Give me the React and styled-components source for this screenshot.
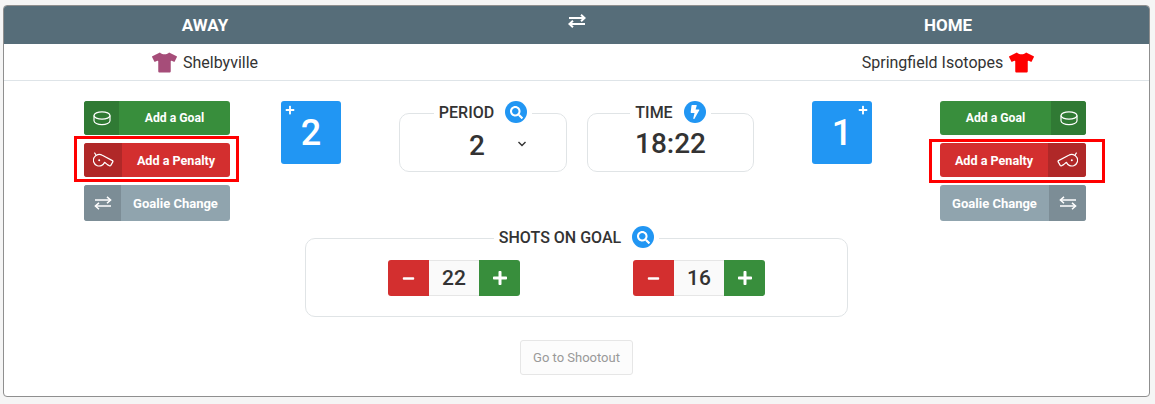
import React from "react";
import styled, { createGlobalStyle } from "styled-components";
import { FaTshirt, FaSearch, FaBolt, FaMinus, FaPlus } from "react-icons/fa";

const GlobalStyle = createGlobalStyle`
  html, body {
    margin: 0;
    padding: 0;
    background: #f5f5f5;
    font-family: Roboto, "Liberation Sans", sans-serif;
    color: #333;
  }
`;

const Puck = () => (
  <svg width="18" height="15" viewBox="0 0 18 15" fill="none" stroke="#fff" strokeWidth="1.2">
    <ellipse cx="9" cy="4.5" rx="8" ry="3.7" />
    <path d="M1 4.5v5.2c0 2.2 3.6 4 8 4s8-1.8 8-4V4.5" />
  </svg>
);

const Whistle = ({ flip }) => (
  <svg
    width="21"
    height="16"
    viewBox="0 0 21 16"
    fill="none"
    stroke="#fff"
    strokeWidth="1.2"
    strokeLinejoin="round"
    style={flip ? { transform: "scaleX(-1)" } : undefined}
  >
    <path d="M1.4 .6 3 3" />
    <path d="M9.3 3.3 19.4 8.6Q20.2 9.1 19.8 9.9L17.8 13.4Q17.3 14.1 16.4 13.7L14.4 12.6 11.6 10.3A5.8 5.8 0 1 1 9.3 3.3Z" />
    <circle cx="6.2" cy="8.2" r="1" fill="#fff" stroke="none" />
  </svg>
);

const Swap = ({ flip, width = 18, weight = 1.5 }) => (
  <svg
    width={width}
    height={width * 0.78}
    viewBox="0 0 18 14"
    fill="none"
    stroke="#fff"
    strokeWidth={weight}
    style={flip ? { transform: "scaleX(-1)" } : undefined}
  >
    <path d="M1 4h15" />
    <path d="M13 .8 16.6 4 13 7.2" />
    <path d="M17 10H2" />
    <path d="M5 6.8 1.4 10 5 13.2" />
  </svg>
);

function ActionButton({ tone, icon, iconWidth, tall, reverse, textSize, children }) {
  return (
    <Action $tone={tone} $tall={tall} $reverse={reverse}>
      <ActionIcon $tone={tone} $width={iconWidth}>
        {icon}
      </ActionIcon>
      <ActionText $size={textSize}>{children}</ActionText>
    </Action>
  );
}

function Actions({ reverse }) {
  return (
    <ActionColumn $reverse={reverse}>
      <ActionButton tone="green" icon={<Puck />} iconWidth={35} textSize={12.2} reverse={reverse}>
        Add a Goal
      </ActionButton>
      <Highlighted $reverse={reverse}>
        <ActionButton tone="red" icon={<Whistle flip={reverse} />} iconWidth={38} textSize={12.6} reverse={reverse}>
          Add a Penalty
        </ActionButton>
      </Highlighted>
      <ActionButton tone="grey" icon={<Swap flip={reverse} />} iconWidth={37} textSize={13} tall reverse={reverse}>
        Goalie Change
      </ActionButton>
    </ActionColumn>
  );
}

function Stepper({ value }) {
  return (
    <StepperRow>
      <StepButton $tone="red">
        <FaMinus size={13} />
      </StepButton>
      <StepValue>{value}</StepValue>
      <StepButton $tone="green">
        <FaPlus size={16} />
      </StepButton>
    </StepperRow>
  );
}

export default function App() {
  return (
    <>
      <GlobalStyle />
      <Page>
        <Card>
          <Header>
            <HeaderTitle>AWAY</HeaderTitle>
            <HeaderSwap>
              <Swap width={18} weight={2} />
            </HeaderSwap>
            <HeaderTitle>HOME</HeaderTitle>
          </Header>
          <Teams>
            <Team>
              <FaTshirt size={25} color="#a64d79" />
              Shelbyville
            </Team>
            <span />
            <Team>
              Springfield Isotopes
              <FaTshirt size={25} color="#ff0000" />
            </Team>
          </Teams>
          <Board>
            <Actions />
            <Score $side="left">
              <ScorePlus $side="left">
                <FaPlus size={10} />
              </ScorePlus>
              2
            </Score>
            <Clocks>
              <Panel $width={168}>
                <PanelLegend>
                  PERIOD
                  <RoundIcon>
                    <FaSearch size={13} />
                  </RoundIcon>
                </PanelLegend>
                <PeriodValue>
                  <BigValue>2</BigValue>
                  <Chevron viewBox="0 0 10 6" fill="none" stroke="#333" strokeWidth="1.4">
                    <path d="M1.5 1 5 4.5 8.5 1" />
                  </Chevron>
                </PeriodValue>
              </Panel>
              <Panel $width={167}>
                <PanelLegend>
                  TIME
                  <RoundIcon>
                    <FaBolt size={14} />
                  </RoundIcon>
                </PanelLegend>
                <TimeValue>
                  <BigValue>18:22</BigValue>
                </TimeValue>
              </Panel>
            </Clocks>
            <Score $side="right">
              <ScorePlus $side="right">
                <FaPlus size={10} />
              </ScorePlus>
              1
            </Score>
            <Actions reverse />
          </Board>
          <ShotsPanel>
            <PanelLegend>
              SHOTS ON GOAL
              <RoundIcon>
                <FaSearch size={13} />
              </RoundIcon>
            </PanelLegend>
            <ShotsRow>
              <Stepper value={22} />
              <Stepper value={16} />
            </ShotsRow>
          </ShotsPanel>
          <Footer>
            <ShootoutButton disabled>Go to Shootout</ShootoutButton>
          </Footer>
        </Card>
      </Page>
    </>
  );
}

const tones = {
  green: { main: "#388e3c", dark: "#307a34" },
  red: { main: "#d32f2f", dark: "#b02828" },
  grey: { main: "#90a4ae", dark: "#7c8d96" },
};

const Page = styled.div`
  padding: 5px 5px 0 3px;
  height: 399px;
  box-sizing: border-box;
`;

const Card = styled.div`
  box-sizing: border-box;
  height: 392px;
  background: #fff;
  border: 1px solid #8f8f8f;
  border-radius: 4px;
  overflow: hidden;
`;

const Header = styled.div`
  display: grid;
  grid-template-columns: 402px 1fr 402px;
  height: 38px;
  background: #566d79;
  color: #fff;
`;

const HeaderTitle = styled.div`
  font-size: 17px;
  font-weight: 700;
  line-height: 39px;
  text-align: center;
`;

const HeaderSwap = styled.div`
  display: flex;
  justify-content: center;
  padding-top: 8px;
`;

const Teams = styled.div`
  display: grid;
  grid-template-columns: 402px 1fr 402px;
  height: 36px;
  border-bottom: 1px solid #dee4e8;
`;

const Team = styled.div`
  display: flex;
  align-items: center;
  justify-content: center;
  gap: 6px;
  font-size: 16px;
  color: #333;
`;

const Board = styled.div`
  display: flex;
  align-items: flex-start;
  padding: 20px 0 0 80px;
`;

const ActionColumn = styled.div`
  display: flex;
  flex-direction: column;
  gap: 8px;
  width: 146px;
  margin-left: ${(p) => (p.$reverse ? "68px" : "0")};
`;

const Action = styled.div`
  display: flex;
  flex-direction: ${(p) => (p.$reverse ? "row-reverse" : "row")};
  height: ${(p) => (p.$tall ? "36px" : "34px")};
  border-radius: 3px;
  overflow: hidden;
  background: ${(p) => tones[p.$tone].main};
  color: #fff;
`;

const ActionIcon = styled.div`
  display: flex;
  align-items: center;
  justify-content: center;
  flex: none;
  width: ${(p) => p.$width}px;
  background: ${(p) => tones[p.$tone].dark};
`;

const ActionText = styled.div`
  flex: 1;
  text-align: center;
  align-self: center;
  font-size: ${(p) => p.$size}px;
  font-weight: 700;
`;

const Highlighted = styled.div`
  position: relative;

  &::after {
    content: "";
    position: absolute;
    top: ${(p) => (p.$reverse ? "-4px" : "-7px")};
    bottom: ${(p) => (p.$reverse ? "-6px" : "-5px")};
    left: ${(p) => (p.$reverse ? "-11px" : "-10px")};
    right: ${(p) => (p.$reverse ? "-19px" : "-9px")};
    border: 3px solid #ff0000;
  }
`;

const Score = styled.div`
  position: relative;
  flex: none;
  width: 60px;
  height: 63px;
  margin-left: ${(p) => (p.$side === "left" ? "51px" : "58px")};
  border-radius: 3px;
  background: #2196f3;
  color: #fff;
  font-size: 36px;
  font-weight: 500;
  line-height: 64px;
  text-align: center;
`;

const ScorePlus = styled.span`
  position: absolute;
  top: 4px;
  ${(p) => p.$side}: 4px;
  display: flex;
  line-height: 1;
`;

const Clocks = styled.div`
  display: flex;
  gap: 20px;
  margin-left: 58px;
`;

const Panel = styled.fieldset`
  box-sizing: border-box;
  width: ${(p) => p.$width}px;
  height: 71px;
  margin: 0;
  padding: 0;
  border: 1px solid #e0e4e6;
  border-radius: 10px;
`;

const PanelLegend = styled.legend`
  display: flex;
  align-items: flex-start;
  gap: 11px;
  height: 24px;
  margin: 0 auto;
  padding: 0 5px;
  font-size: 16px;
  font-weight: 500;
  line-height: 23px;
  color: #333;
`;

const RoundIcon = styled.span`
  display: flex;
  align-items: center;
  justify-content: center;
  width: 22px;
  height: 22px;
  border-radius: 50%;
  background: #2196f3;
  color: #fff;
`;

const BigValue = styled.span`
  font-size: 28px;
  font-weight: 500;
  line-height: 36px;
  color: #333;
`;

const PeriodValue = styled.div`
  display: flex;
  align-items: center;
  padding: 3px 0 0 69px;
`;

const Chevron = styled.svg`
  width: 10px;
  height: 6px;
  margin: -4px 0 0 32px;
`;

const TimeValue = styled.div`
  padding-top: 1px;
  text-align: center;
`;

const ShotsPanel = styled.fieldset`
  box-sizing: border-box;
  width: 543px;
  height: 91px;
  margin: 5px 0 0 301px;
  padding: 0;
  border: 1px solid #e0e4e6;
  border-radius: 10px;
`;

const ShotsRow = styled.div`
  display: flex;
  justify-content: center;
  gap: 113px;
  padding-top: 10px;
`;

const StepperRow = styled.div`
  display: flex;
  height: 36px;
  border-radius: 3px;
  overflow: hidden;
`;

const StepButton = styled.div`
  display: flex;
  align-items: center;
  justify-content: center;
  width: 41px;
  background: ${(p) => tones[p.$tone].main};
  color: #fff;
`;

const StepValue = styled.div`
  box-sizing: border-box;
  width: 50px;
  background: #fafafa;
  border-top: 1px solid #e6e6e6;
  border-bottom: 1px solid #e6e6e6;
  font-size: 21px;
  font-weight: 500;
  line-height: 34px;
  text-align: center;
  color: #333;
`;

const Footer = styled.div`
  display: flex;
  justify-content: center;
  padding-top: 23px;
`;

const ShootoutButton = styled.button`
  box-sizing: border-box;
  width: 113px;
  height: 35px;
  padding: 0;
  background: #fcfcfc;
  border: 1px solid #e6e6e6;
  border-radius: 3px;
  font-family: Roboto, "Liberation Sans", sans-serif;
  font-size: 13px;
  color: #999;
`;
